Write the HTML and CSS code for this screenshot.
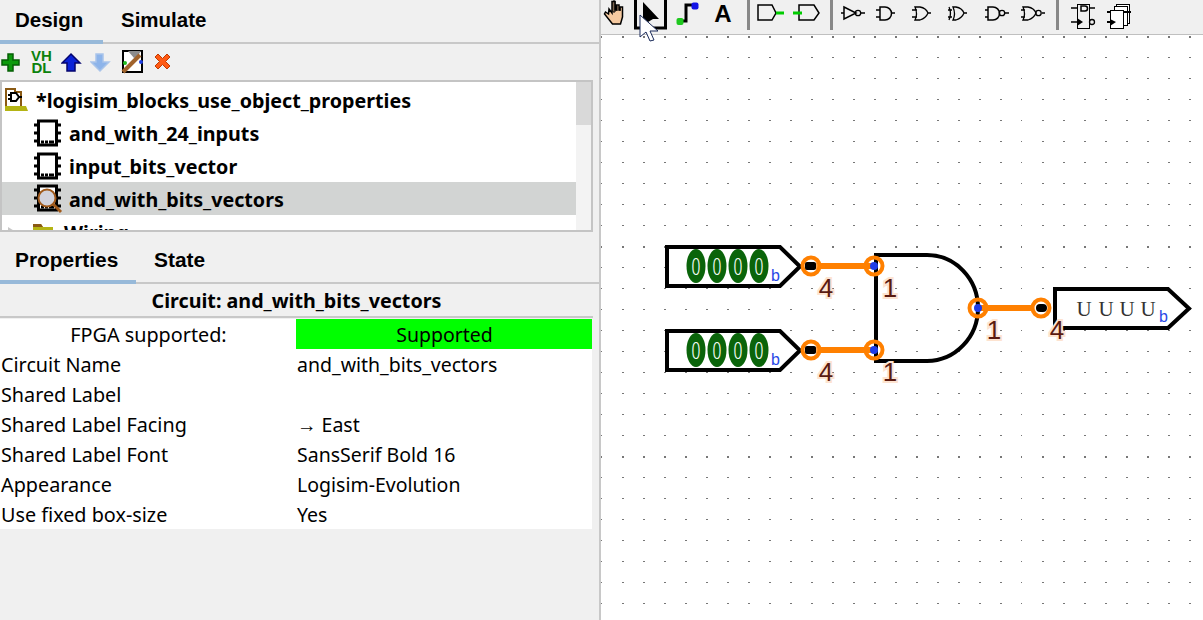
FILE: index.html
```html
<!DOCTYPE html>
<html lang="en">
<head>
    <meta charset="UTF-8">
    <title>Logisim-evolution</title>
    <link rel="stylesheet" href="styles.css">
</head>
<body>
<div class="app">
    <div class="left">
        <div class="tabs tabs-top">
            <div class="tab tab-design">Design</div>
            <div class="tab">Simulate</div>
        </div>
        <div class="tree-tools">
            <svg width="22" height="24" viewBox="0 47 22 24"><path d="M8 51h5v6h6v5h-6v6H8v-6H2v-5h6z" fill="#0c9a0c" stroke="#055f05" stroke-width="1.5"/></svg>
            <span class="vhdl">VH<br>DL</span>
            <svg class="arrow" width="22" height="24" viewBox="60 47 22 24"><path d="M70 51l9 9h-5v8h-8v-8h-5z" fill="#0a22d8" stroke="#04046e" stroke-width="1.5"/></svg>
            <svg class="arrow-down" width="22" height="24" viewBox="89 47 22 24"><path d="M95 51h7v8h6l-9 9-9-9h5z" fill="#8db4ea" stroke="#a9c4ea" stroke-width="1.5"/></svg>
            <svg class="wrench" width="24" height="26" viewBox="120 48 24 26">
                <rect x="122" y="50" width="19" height="21" fill="#fff" stroke="#000" stroke-width="2"/>
                <path d="M127 50h13l-4 6-3 1z" fill="#8c8c8c"/>
                <path d="M122 71l17-17" stroke="#a0632c" stroke-width="4"/>
                <circle cx="124" cy="62" r="2" fill="#1fbf1f"/>
                <circle cx="140" cy="61" r="2" fill="#1f3fe0"/>
            </svg>
            <svg class="cross" width="20" height="22" viewBox="152 49 20 22"><path d="M154 55l3-3 4.500 4.500 4.500-4.500 3 3-4.500 4.500 4.500 4.500-3 3-4.500-4.500-4.500 4.500-3-3 4.500-4.500z" fill="#ff5a14" stroke="#c23a00"/></svg>
        </div>
        <div class="tree">
            <div class="tree-list">
                <div class="tree-row tree-project">
                    <svg class="tree-icon" width="24" height="24" viewBox="4 87 24 24">
                        <path d="M6 88h9v3h6v16h-15z" fill="#fff" stroke="#8a5a14" stroke-width="2"/>
                        <path d="M5 105h21l2 5h-23z" fill="#b4b414"/>
                        <path d="M11 92h5l3 4-3 4h-5zM8 94h3M8 98h3M19 96h3" fill="none" stroke="#000" stroke-width="2"/>
                    </svg>
                    <span class="tree-label">*logisim_blocks_use_object_properties</span>
                </div>
                <div class="tree-row">
                    <svg class="tree-icon" width="28" height="28" viewBox="0 0 28 28"><use href="#chip"/></svg>
                    <span class="tree-label">and_with_24_inputs</span>
                </div>
                <div class="tree-row">
                    <svg class="tree-icon" width="28" height="28" viewBox="0 0 28 28"><use href="#chip"/></svg>
                    <span class="tree-label">input_bits_vector</span>
                </div>
                <div class="tree-row tree-selected">
                    <svg class="tree-icon" width="30" height="30" viewBox="0 0 30 30">
                        <use href="#chip"/>
                        <circle cx="14" cy="14" r="8.500" fill="#d2d2dc" stroke="#a05a1c" stroke-width="2"/>
                        <path d="M20 20l8 8" stroke="#a05a1c" stroke-width="3"/>
                    </svg>
                    <span class="tree-label">and_with_bits_vectors</span>
                </div>
                <div class="tree-row tree-folder">
                    <span class="expander"></span>
                    <svg class="tree-icon" width="22" height="20" viewBox="0 0 22 20"><path d="M0 2h8l2 3h10v15H0z" fill="#b4b414"/><path d="M0 2h8l2 3H0z" fill="#8a5a14"/></svg>
                    <span class="tree-label">Wiring</span>
                </div>
            </div>
            <div class="scrollbar"><div class="scroll-thumb"></div></div>
        </div>
        <div class="tabs tabs-props">
            <div class="tab tab-props">Properties</div>
            <div class="tab">State</div>
        </div>
        <div class="props-title">Circuit: and_with_bits_vectors</div>
        <div class="props">
            <div class="prop-row prop-fpga">
                <div class="prop-name">FPGA supported:</div>
                <div class="prop-value supported">Supported</div>
            </div>
            <div class="prop-row"><div class="prop-name">Circuit Name</div><div class="prop-value">and_with_bits_vectors</div></div>
            <div class="prop-row"><div class="prop-name">Shared Label</div><div class="prop-value"></div></div>
            <div class="prop-row"><div class="prop-name">Shared Label Facing</div><div class="prop-value">→ East</div></div>
            <div class="prop-row"><div class="prop-name">Shared Label Font</div><div class="prop-value">SansSerif Bold 16</div></div>
            <div class="prop-row"><div class="prop-name">Appearance</div><div class="prop-value">Logisim-Evolution</div></div>
            <div class="prop-row"><div class="prop-name">Use fixed box-size</div><div class="prop-value">Yes</div></div>
        </div>
    </div>

    <div class="right">
        <div class="toolbar">
            <svg width="21" height="34" viewBox="603 0 21 34">
                <path d="M609 9l3 4V1.500h3V10h1.500V5h2.500v5h1V7h2.500v10l-2 7h-8l-8-10 1-2 3 2z" fill="#f5c9a0" stroke="#000" stroke-width="1.500"/>
                <path d="M613 1v11h2V1zM617 11V6M620 11V8" stroke="#000" fill="none"/>
            </svg>
            <svg class="tool-select" width="34" height="34" viewBox="634 0 34 34">
                <path d="M635.500 0v28h30V0" fill="none" stroke="#000" stroke-width="3"/>
                <path d="M643 2l16 17h-6l-10 6z" fill="#000"/>
            </svg>
            <svg class="tool-wire" width="24" height="34" viewBox="676 0 24 34">
                <path d="M680 21h6V5h9" fill="none" stroke="#000" stroke-width="3"/>
                <rect x="676.500" y="18" width="7" height="7" rx="2" fill="#1fc81f"/>
                <rect x="691.500" y="2.500" width="7" height="7" rx="2" fill="#1414e6"/>
            </svg>
            <span class="tool-text">A</span>
            <span class="tool-sep sep-first"></span>
            <svg class="tool-gate-a" width="28" height="34" viewBox="757 0 28 34">
                <path d="M758 5h14l4 8-4 7h-14z" fill="none" stroke="#000" stroke-width="1.500"/>
                <path d="M776 13h8" stroke="#0c0" stroke-width="3"/>
            </svg>
            <svg class="tool-gate-b" width="28" height="34" viewBox="793 0 28 34">
                <path d="M799 5h15l5 8-5 7h-15z" fill="none" stroke="#000" stroke-width="1.500"/>
                <path d="M793 13h9" stroke="#0c0" stroke-width="3"/>
            </svg>
            <span class="tool-sep sep-second"></span>
            <svg class="tool-not" width="24" height="34" viewBox="843 0 24 34">
                <path d="M846 7l12 6-12 6zM843 13h3M863 13h4" fill="none" stroke="#000" stroke-width="1.500"/>
                <circle cx="860" cy="13" r="2.700" fill="none" stroke="#000" stroke-width="1.300"/>
            </svg>
            <svg class="tool-and" width="19" height="34" viewBox="878 0 19 34">
                <path d="M882 7h5a6 6 0 0 1 0 13h-5zM878 10h4M878 17h4M893 13h4" fill="none" stroke="#000" stroke-width="1.500"/>
            </svg>
            <svg class="tool-or" width="20" height="34" viewBox="914 0 20 34">
                <path d="M917 7h5q6 1 8 6-2 5-8 7h-5q3-6 0-13zM914 10h5M914 17h5M930 13h3" fill="none" stroke="#000" stroke-width="1.300"/>
            </svg>
            <svg class="tool-xor" width="20" height="34" viewBox="950 0 20 34">
                <path d="M951 7q3 6 0 13M955 7h3q6 1 8 6-2 5-8 7h-3q3-6 0-13zM950 10h4M950 17h4M966 13h3" fill="none" stroke="#000" stroke-width="1.300"/>
            </svg>
            <svg class="tool-nand" width="24" height="34" viewBox="987 0 24 34">
                <path d="M990 7h5a6 6 0 0 1 0 13h-5zM987 10h3M987 17h3M1007 13h4" fill="none" stroke="#000" stroke-width="1.500"/>
                <circle cx="1004" cy="13" r="2.700" fill="none" stroke="#000" stroke-width="1.300"/>
            </svg>
            <svg class="tool-nor" width="24" height="34" viewBox="1023 0 24 34">
                <path d="M1025 7h5q6 1 8 6-2 5-8 7h-5q3-6 0-13zM1023 10h4M1023 17h4M1044 13h3" fill="none" stroke="#000" stroke-width="1.300"/>
                <circle cx="1040.500" cy="13" r="2.700" fill="none" stroke="#000" stroke-width="1.300"/>
            </svg>
            <span class="tool-sep sep-third"></span>
            <svg class="tool-sub" width="25" height="34" viewBox="1073 0 25 34">
                <rect x="1079.500" y="4.500" width="12" height="24" fill="none" stroke="#000"/>
                <path d="M1073 8h6M1092 8h5M1073 22h6" stroke="#000" stroke-width="1.300"/>
                <path d="M1083 6h4a2 2 0 0 1 0 5h-4z" fill="none" stroke="#000" stroke-width="1.500"/>
                <path d="M1079 18l6 4-6 4z" fill="#000"/>
                <circle cx="1094" cy="22" r="2.500" fill="none" stroke="#000" stroke-width="1.300"/>
            </svg>
            <svg class="tool-stack" width="25" height="34" viewBox="1109 0 25 34">
                <rect x="1118.500" y="4.500" width="13" height="19" fill="#fff" stroke="#000"/>
                <rect x="1116.500" y="6.500" width="13" height="19" fill="#fff" stroke="#000"/>
                <rect x="1112.500" y="10.500" width="13" height="18" fill="#fff" stroke="#000"/>
                <path d="M1109 12h4M1126 12h7M1109 22h4" stroke="#000" stroke-width="2"/>
                <path d="M1112 19l6 3-6 4z" fill="#000"/>
            </svg>
        </div>
        <svg class="canvas" width="602" height="585" viewBox="601 35 602 585">
            <defs>
                <pattern id="dots" x="601" y="36" width="21" height="21" patternUnits="userSpaceOnUse">
                    <rect width="2" height="1" fill="#777"/>
                </pattern>
                <pattern id="dots-major" x="601" y="36" width="21" height="210" patternUnits="userSpaceOnUse">
                    <rect width="2" height="2" fill="#777"/>
                </pattern>
                <g id="chip">
                    <rect x="5.500" y="2" width="18" height="24" fill="#fff" stroke="#000" stroke-width="3"/>
                    <path d="M1 6h3M1 14h3M1 22h3M25 6h3M25 14h3M25 22h3" stroke="#000" stroke-width="3"/>
                    <path d="M8 23h3M12 23h3M16 23h5" stroke="#000" stroke-width="3"/>
                </g>
                <g id="input-pin">
                    <path d="M667 247h113l20 19.500-20 19.500h-113z" fill="#fff" stroke="#000" stroke-width="4"/>
                    <ellipse cx="696" cy="266" rx="9.500" ry="17" fill="#0a640a"/>
                    <ellipse cx="717" cy="266" rx="9.500" ry="17" fill="#0a640a"/>
                    <ellipse cx="738" cy="266" rx="9.500" ry="17" fill="#0a640a"/>
                    <ellipse cx="759" cy="266" rx="9.500" ry="17" fill="#0a640a"/>
                    <text class="pin-bit" x="696" y="275">0</text>
                    <text class="pin-bit" x="717" y="275">0</text>
                    <text class="pin-bit" x="738" y="275">0</text>
                    <text class="pin-bit" x="759" y="275">0</text>
                    <text class="pin-radix" x="771" y="281">b</text>
                    <path d="M811 266h63" stroke="#ff8000" stroke-width="6"/>
                    <circle cx="811" cy="266" r="8.500" fill="#fff" fill-opacity=".3" stroke="#ff8000" stroke-width="4"/>
                    <rect x="805" y="262" width="11" height="8" rx="2" fill="#000"/>
                    <text class="wire-width" x="826" y="297">4</text>
                </g>
            </defs>
            <rect x="601" y="35" width="602" height="585" fill="#fff"/>
            <rect x="601" y="35" width="602" height="585" fill="url(#dots)"/>
            <rect x="601" y="35" width="602" height="585" fill="url(#dots-major)"/>
            <path d="M602.500 35v585M1022.500 35v585" stroke="#fff"/>

            <use href="#input-pin"/>
            <use href="#input-pin" y="84"/>

            <path d="M876 255h51a51 53 0 0 1 0 106h-51z" fill="none" stroke="#000" stroke-width="4"/>

            <circle cx="874" cy="266" r="8.500" fill="none" stroke="#ff8000" stroke-width="4"/>
            <circle cx="874" cy="266" r="4" fill="#1e3ce6"/>
            <circle cx="874" cy="350" r="8.500" fill="none" stroke="#ff8000" stroke-width="4"/>
            <circle cx="874" cy="350" r="4" fill="#1e3ce6"/>
            <text class="wire-width" x="890" y="297">1</text>
            <text class="wire-width" x="890" y="381">1</text>

            <path d="M978 308h63" stroke="#ff8000" stroke-width="6"/>
            <circle cx="978" cy="308" r="8.500" fill="none" stroke="#ff8000" stroke-width="4"/>
            <circle cx="978" cy="308" r="4" fill="#1e3ce6"/>
            <text class="wire-width" x="994" y="339">1</text>

            <path d="M1055 289h113l21 19.500-21 19.500h-113z" fill="#fff" stroke="#000" stroke-width="4"/>
            <circle cx="1041" cy="308" r="8.500" fill="#fff" stroke="#ff8000" stroke-width="4"/>
            <rect x="1036" y="304" width="11" height="8" rx="4" fill="#000"/>
            <text class="pin-out" x="1084" y="316">U</text>
            <text class="pin-out" x="1106" y="316">U</text>
            <text class="pin-out" x="1127" y="316">U</text>
            <text class="pin-out" x="1148" y="316">U</text>
            <text class="pin-radix" x="1159" y="322">b</text>
            <text class="wire-width" x="1057" y="339">4</text>
        </svg>
    </div>
    <svg class="cursor" width="22" height="28" viewBox="0 0 22 28">
        <path d="M1 1l18 16h-8l4 9-4 1-4-9-6 5z" fill="#fff" stroke="#1a2a5a"/>
    </svg>
</div>
</body>
</html>
```

FILE: styles.css
```css
* {
    box-sizing: border-box;
}
html, body {
    margin: 0;
    height: 100%;
    overflow: hidden;
}
body {
    background-color: #f0f0f0;
    font-family: "Noto Sans", sans-serif;
    font-size: 19.5px;
    color: #000;
}
svg {
    display: block;
    flex: none;
}
.app {
    position: relative;
    display: flex;
    width: 1203px;
    height: 620px;
}
.left {
    width: 601px;
    height: 620px;
    border-right: 2px solid #c8c8c8;
    flex: none;
}
.right {
    flex: 1;
    display: flex;
    flex-direction: column;
}

/* tabs */
.tabs {
    display: flex;
    font-family: "Liberation Sans", sans-serif;
    font-weight: bold;
    font-size: 20.5px;
    border-bottom: 2px solid #c8c8c8;
}
.tabs-top {
    height: 44px;
}
.tabs-props {
    height: 52px;
    font-size: 20.9px;
}
.tab {
    padding: 8px 15px 0 18px;
    line-height: 24px;
}
.tab-design, .tab-props {
    padding-left: 15px;
    padding-right: 18px;
    border-bottom: 4px solid #97b9d9;
    margin-bottom: -2px;
}
.tabs-props .tab {
    padding-top: 16px;
}
.tab-design {
    width: 103px;
}
.tab-props {
    width: 136px;
}

/* toolbar over the tree */
.tree-tools {
    display: flex;
    align-items: center;
    height: 36px;
}
.vhdl {
    width: 21px;
    margin-left: 9px;
    font-family: "Liberation Sans", sans-serif;
    font-size: 15px;
    line-height: 12px;
    color: #0c820c;
    text-align: center;
    font-weight: bold;
}
.arrow {
    margin-left: 9px;
}
.arrow-down {
    margin-left: 7px;
}
.wrench {
    margin-left: 9px;
}
.cross {
    margin-left: 8px;
}

/* tree */
.tree {
    display: flex;
    width: 593px;
    height: 152px;
    border: 2px solid #c4c4c4;
    background-color: #fff;
    overflow: hidden;
}
.tree-list {
    flex: 1;
    padding-top: 1px;
}
.tree-row {
    display: flex;
    align-items: center;
    height: 33px;
    padding-left: 31px;
    gap: 8px;
    font-size: 19.7px;
    font-weight: bold;
    white-space: nowrap;
}
.tree-label {
    padding-top: 2px;
}
.tree-project {
    padding-left: 2px;
}
.tree-selected {
    gap: 6px;
    background-color: #d2d4d3;
}
.tree-folder {
    padding-left: 6px;
    gap: 9px;
}
.expander {
    width: 0;
    height: 0;
    margin-right: 8px;
    border-left: 8px solid #c8c8c8;
    border-top: 5px solid transparent;
    border-bottom: 5px solid transparent;
}
.scrollbar {
    width: 15px;
    background-color: #f3f3f3;
}
.scroll-thumb {
    height: 43px;
    background-color: #d9d9d9;
}

/* properties */
.props-title {
    width: 593px;
    height: 34px;
    padding-top: 2px;
    line-height: 30px;
    text-align: center;
    font-weight: bold;
    font-size: 19.7px;
    border-bottom: 2px solid #c8c8c8;
}
.props {
    width: 592px;
    margin-top: 1px;
    background-color: #fff;
}
.prop-row {
    display: flex;
    height: 30px;
    line-height: 32px;
}
.prop-name {
    width: 296px;
    padding-left: 1px;
    font-size: 19.8px;
}
.prop-value {
    flex: 1;
    padding-left: 1px;
}
.prop-fpga .prop-name {
    text-align: center;
}
.supported {
    background-color: #00ff00;
    text-align: center;
}

/* main toolbar */
.toolbar {
    display: flex;
    height: 35px;
    padding-left: 2px;
    border-bottom: 1px solid #c0c0c0;
    background-color: #f0f0f0;
}
.tool-select { margin-left: 10px; }
.tool-wire { margin-left: 8px; }
.tool-text {
    width: 20px;
    margin-left: 13px;
    font-family: "Liberation Sans", sans-serif;
    font-weight: bold;
    font-size: 24px;
    line-height: 27px;
    text-align: center;
}
.tool-sep {
    width: 3px;
    height: 30px;
    background-color: #888;
}
.sep-first { margin-left: 14px; }
.tool-gate-a { margin-left: 7px; }
.tool-gate-b { margin-left: 8px; }
.sep-second { margin-left: 9px; }
.tool-not { margin-left: 8px; }
.tool-and { margin-left: 11px; }
.tool-or { margin-left: 17px; }
.tool-xor { margin-left: 16px; }
.tool-nand { margin-left: 17px; }
.tool-nor { margin-left: 12px; }
.sep-third { margin-left: 11px; }
.tool-sub { margin-left: 12px; }
.tool-stack { margin-left: 11px; }

/* canvas */
.pin-bit {
    font-family: "Open Sans", sans-serif;
    font-size: 23px;
    font-weight: 300;
    font-stretch: 75%;
    fill: #f4fbf4;
    text-anchor: middle;
}
.pin-radix {
    font-family: "Liberation Sans", sans-serif;
    font-size: 16px;
    fill: #2a4ae6;
}
.pin-out {
    font-family: "Liberation Serif", serif;
    font-size: 21px;
    fill: #333;
    text-anchor: middle;
}
.wire-width {
    font-family: "Liberation Sans", sans-serif;
    font-size: 26px;
    fill: #5a1a10;
    stroke: #fde3d0;
    stroke-width: 4px;
    paint-order: stroke;
    text-anchor: middle;
}

/* mouse pointer in the shot */
.cursor {
    position: absolute;
    left: 639px;
    top: 14px;
}
```
